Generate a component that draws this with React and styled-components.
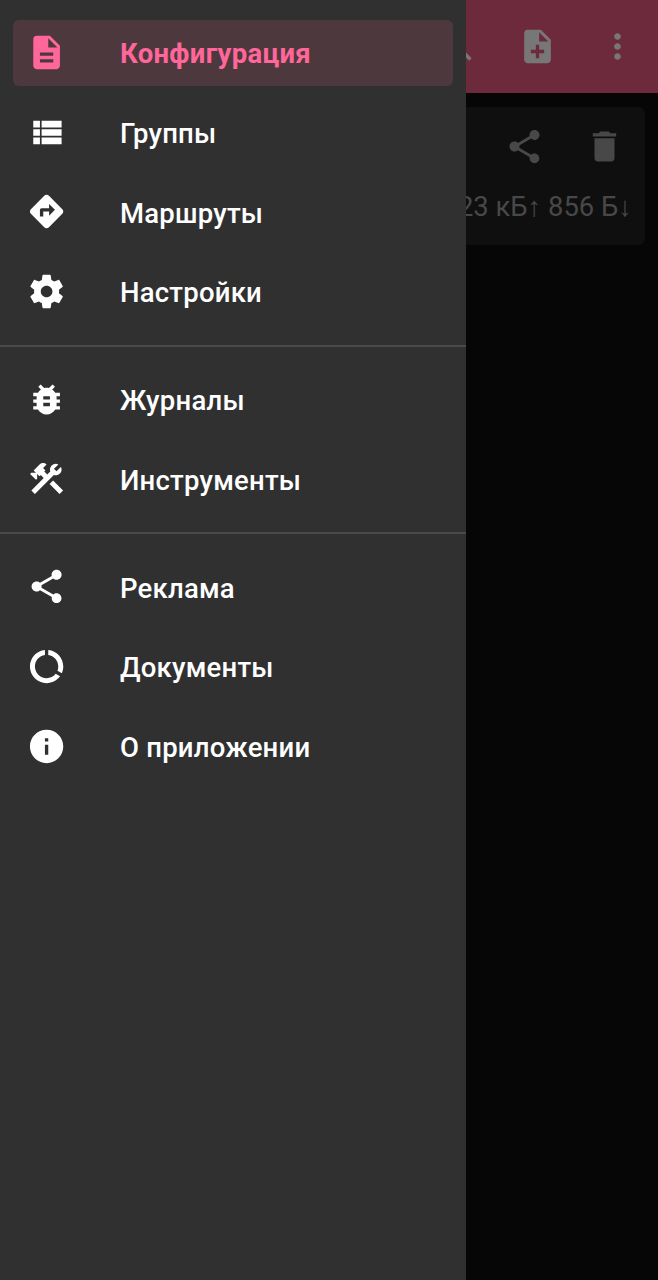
import React from 'react'
import styled, { createGlobalStyle } from 'styled-components'
import {
    MdDescription, MdDirections, MdBugReport,
    MdShare, MdDataUsage, MdInfo, MdNoteAdd, MdMoreVert, MdDelete, MdSearch
} from 'react-icons/md'

const GlobalStyle = createGlobalStyle`
    body {
        margin: 0;
        background: #060606;
        font-family: Roboto, "Noto Sans", sans-serif;
    }
    * { box-sizing: border-box; }
`
const Screen = styled.div`
    position: relative;
    width: 658px;
    height: 1280px;
    overflow: hidden;
    background: #060606;
`
const Toolbar = styled.header`
    display: flex;
    align-items: center;
    justify-content: flex-end;
    gap: 40px;
    height: 93px;
    padding-right: 20px;
    background: #6d2a3c;
    color: #777777;

    svg { display: block; width: 40px; height: 40px; transform: translate(-0.5px, -0.5px); }
`
const Card = styled.section`
    height: 138px;
    margin: 14px 13px 0;
    padding: 20px 20px 0 0;
    border-radius: 6px;
    background: #0f0f0f;
    color: #484848;
`
const CardActions = styled.div`
    display: flex;
    justify-content: flex-end;
    gap: 40px;

    svg { display: block; width: 40px; height: 40px; transform: translate(-0.5px, -0.4px); }
`
const Traffic = styled.div`
    margin: 23px -7px 0 0;
    text-align: right;
    font-size: 27.4px;
    line-height: 34px;
    white-space: nowrap;
`
const Drawer = styled.nav`
    position: absolute;
    top: 0;
    left: 0;
    width: 466px;
    height: 1280px;
    padding-top: 19.7px;
    background: #303030;
`
const Group = styled.div`
    display: flex;
    flex-direction: column;
    gap: 13.3px;
    padding: 0 13px;
`
const Item = styled.a`
    display: flex;
    align-items: center;
    height: 66.4px;
    padding-left: 13.7px;
    border-radius: 6px;
    background: ${props => props.$active ? '#4d383e' : 'transparent'};
    color: ${props => props.$active ? '#ff6699' : '#ffffff'};

    svg { display: block; width: 40px; height: 40px; transform: translate(-0.4px, -0.5px); }
`
const Label = styled.span`
    margin-left: 53.3px;
    padding-top: 2px;
    font-size: 27.5px;
    font-weight: ${props => props.$active ? 700 : 500};
    letter-spacing: ${props => props.$active ? '0.3px' : '0.22px'};
    white-space: nowrap;
`
const Divider = styled.div`
    height: 2px;
    margin: 19.7px 0;
    background: #4a4a4a;
`

const ListIcon = () => (
    <svg viewBox="0 0 24 24" fill="currentColor">
        <path d="M4 14h4v-4H4v4zm0 5h4v-4H4v4zM4 9h4V5H4v4zm5 5h12v-4H9v4zm0 5h12v-4H9v4zM9 5v4h12V5H9z" />
    </svg>
)
const GearIcon = () => (
    <svg viewBox="0 0 24 24" fill="currentColor">
        <path d="M19.43 12.98c.04-.32.07-.64.07-.98s-.03-.66-.07-.98l2.11-1.65c.19-.15.24-.42.12-.64l-2-3.46c-.12-.22-.39-.3-.61-.22l-2.49 1c-.52-.4-1.08-.73-1.69-.98l-.38-2.65C14.46 2.18 14.25 2 14 2h-4c-.25 0-.46.18-.49.42l-.38 2.65c-.61.25-1.17.59-1.69.98l-2.49-1c-.23-.09-.49 0-.61.22l-2 3.46c-.13.22-.07.49.12.64l2.11 1.65c-.04.32-.07.65-.07.98s.03.66.07.98l-2.11 1.65c-.19.15-.24.42-.12.64l2 3.46c.12.22.39.3.61.22l2.49-1c.52.4 1.08.73 1.69.98l.38 2.65c.03.24.24.42.49.42h4c.25 0 .46-.18.49-.42l.38-2.65c.61-.25 1.17-.59 1.69-.98l2.49 1c.23.09.49 0 .61-.22l2-3.46c.12-.22.07-.49-.12-.64l-2.11-1.65zM12 15.5c-1.93 0-3.5-1.57-3.5-3.5s1.57-3.5 3.5-3.5 3.5 1.57 3.5 3.5-1.57 3.5-3.5 3.5z" />
    </svg>
)
const ToolsIcon = () => (
    <svg viewBox="0 0 24 24" fill="currentColor">
        <path d="M13.78 15.3l6 6 2.11-2.16-6-6zm3.72-5.2c-.39 0-.81-.05-1.14-.19L4.97 21.25l-2.11-2.11 7.41-7.4L8.5 9.96l-.72.7-1.45-1.41v2.86l-.7.7-3.52-3.56.7-.7h2.81l-1.4-1.41 3.56-3.56a2.976 2.976 0 0 1 4.22 0L9.89 5.74l1.41 1.4-.71.71 1.79 1.78 1.82-1.88c-.14-.33-.2-.75-.2-1.12a3.49 3.49 0 0 1 3.5-3.52c.59 0 1.11.14 1.58.42L16.41 6.2l1.5 1.5 2.67-2.67c.28.47.42.97.42 1.6 0 1.92-1.55 3.47-3.5 3.47z" />
    </svg>
)

const groups = [
    [
        { icon: MdDescription, text: 'Конфигурация', active: true },
        { icon: ListIcon, text: 'Группы' },
        { icon: MdDirections, text: 'Маршруты' },
        { icon: GearIcon, text: 'Настройки' },
    ],
    [
        { icon: MdBugReport, text: 'Журналы' },
        { icon: ToolsIcon, text: 'Инструменты' },
    ],
    [
        { icon: MdShare, text: 'Реклама' },
        { icon: MdDataUsage, text: 'Документы' },
        { icon: MdInfo, text: 'О приложении' },
    ],
]

export default function App() {
    return <Screen>
        <GlobalStyle />
        <Toolbar>
            <MdSearch />
            <MdNoteAdd />
            <MdMoreVert />
        </Toolbar>
        <Card>
            <CardActions>
                <MdShare />
                <MdDelete />
            </CardActions>
            <Traffic>23 кБ↑ 856 Б↓</Traffic>
        </Card>
        <Drawer>
            {groups.map((items, i) => (
                <React.Fragment key={i}>
                    {i > 0 && <Divider />}
                    <Group>
                        {items.map(({ icon: Icon, text, active }) => (
                            <Item key={text} $active={active}>
                                <Icon />
                                <Label $active={active}>{text}</Label>
                            </Item>
                        ))}
                    </Group>
                </React.Fragment>
            ))}
        </Drawer>
    </Screen>
}
